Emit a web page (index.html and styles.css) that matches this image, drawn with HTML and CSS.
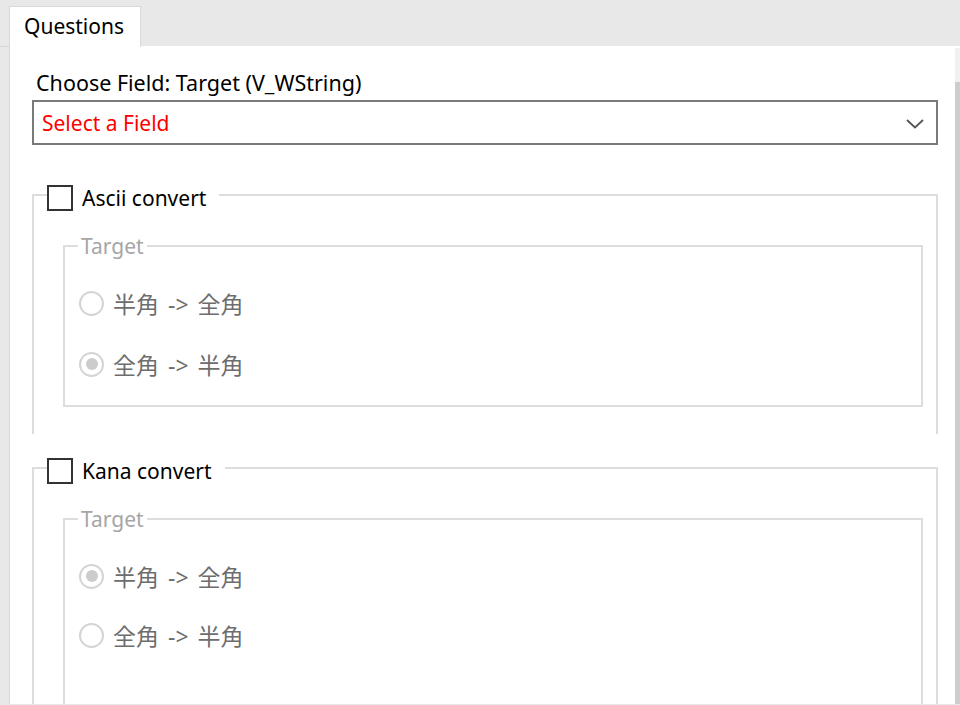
FILE: index.html
```html
<!DOCTYPE html>
<html lang="ja">
<head>
<meta charset="utf-8">
<title>Questions</title>
<link rel="stylesheet" href="styles.css">
</head>
<body>
<div class="tabbar">
  <div class="tab">Questions</div>
</div>
<div class="main">
  <div class="panel">
    <div class="field-label">Choose Field: Target (V_WString)</div>
    <div class="select">
      <span class="select-text">Select a Field</span>
      <svg class="chevron" width="18" height="10" viewBox="0 0 18 10"><path d="M1 1 L9 8.5 L17 1" fill="none" stroke="#555" stroke-width="1.8"/></svg>
    </div>

    <fieldset class="group group-ascii">
      <legend class="group-legend"><span class="checkbox"></span><span class="cb-label">Ascii convert</span></legend>
      <fieldset class="inner inner-ascii">
        <legend class="inner-legend">Target</legend>
        <div class="radio-row"><span class="radio"></span><span class="radio-label">半角 -&gt; 全角</span></div>
        <div class="radio-row"><span class="radio checked"></span><span class="radio-label">全角 -&gt; 半角</span></div>
      </fieldset>
    </fieldset>

    <fieldset class="group group-kana">
      <legend class="group-legend"><span class="checkbox"></span><span class="cb-label">Kana convert</span></legend>
      <fieldset class="inner inner-kana">
        <legend class="inner-legend">Target</legend>
        <div class="radio-row"><span class="radio checked"></span><span class="radio-label">半角 -&gt; 全角</span></div>
        <div class="radio-row"><span class="radio"></span><span class="radio-label">全角 -&gt; 半角</span></div>
      </fieldset>
    </fieldset>
  </div>
  <div class="scrollbar">
    <div class="scroll-top"></div>
    <div class="scroll-thumb"></div>
  </div>
</div>
</body>
</html>
```

FILE: styles.css
```css
html, body {
  margin: 0;
  padding: 0;
}
body {
  width: 960px;
  height: 705px;
  overflow: hidden;
  background: #e8e8e8;
  font-family: "Noto Sans", "Noto Sans CJK JP", sans-serif;
  font-size: 21px;
  color: #000;
}
.tabbar {
  height: 47px;
  box-sizing: border-box;
  padding: 6px 0 0 9px;
  border-bottom: 1px solid #d6d6d6;
  display: flex;
}
.tab {
  background: #fff;
  border: 1px solid #d9d9d9;
  border-bottom: none;
  height: 41px;
  box-sizing: border-box;
  width: 132px;
  padding: 0 0 0 14px;
  line-height: 38px;
  font-size: 21px;
  color: #000;
  position: relative;
  z-index: 1;
}
.main {
  display: flex;
  height: 658px;
  margin-top: -1px;
  margin-left: 9px;
  background: #fff;
  border-left: 1px solid #d9d9d9;
}
.panel {
  flex: 1;
  padding-top: 22px;
  overflow: hidden;
}
.field-label {
  margin-left: 26px;
  height: 30px;
  line-height: 30px;
  margin-bottom: 2px;
  font-size: 21.5px;
}
.select {
  margin-left: 22px;
  width: 906px;
  height: 45px;
  box-sizing: border-box;
  border: 2px solid #7a7a7a;
  display: flex;
  align-items: center;
  justify-content: space-between;
  padding: 0 12px 0 8px;
}
.select-text {
  color: #ff0000;
}
.chevron {
  display: block;
  margin-top: 2px;
}
.group {
  margin: 0 0 0 22px;
  width: 906px;
  box-sizing: border-box;
  border: 2px solid #dddddd;
  border-bottom: none;
  padding: 0 13px 0 29px;
  min-width: 0;
}
.group-ascii {
  margin-top: 34px;
  height: 255px;
}
.group-kana {
  margin-top: 18px;
  height: 400px;
}
.group-legend {
  display: flex;
  align-items: center;
  padding: 6px 0 0 0;
  margin-left: -16px;
  height: 32px;
  box-sizing: border-box;
}
.checkbox {
  width: 26px;
  height: 26px;
  box-sizing: border-box;
  border: 2px solid #333;
  background: #fff;
}
.cb-label {
  margin-left: 9px;
  margin-right: 13px;
  line-height: 26px;
}
.inner {
  margin: 23px 0 0 0;
  border: 2px solid #dddddd;
  padding: 25px 0 21px 14px;
  min-width: 0;
  display: flex;
  flex-direction: column;
  gap: 21px;
}
.inner-kana {
  border-bottom: none;
  height: 300px;
  gap: 19px;
}
.inner-legend {
  color: #a6a6a6;
  line-height: 24px;
  padding: 0 3px;
  margin-left: -1px;
}
.radio-row {
  height: 40px;
  display: flex;
  align-items: center;
}
.radio {
  width: 25px;
  height: 25px;
  box-sizing: border-box;
  border: 2px solid #d4d4d4;
  border-radius: 50%;
  display: flex;
  align-items: center;
  justify-content: center;
}
.radio.checked::after {
  content: "";
  width: 12px;
  height: 12px;
  border-radius: 50%;
  background: #cccccc;
}
.radio-label {
  margin-left: 9px;
  font-size: 23px;
  word-spacing: 3px;
  color: #6d6d6d;
}
.scrollbar {
  width: 5px;
  margin-left: 17px;
  display: flex;
  flex-direction: column;
  padding-top: 2px;
}
.scroll-top {
  height: 34px;
  background: #f0f0f0;
}
.scroll-thumb {
  flex: 1;
  background: #cdcdcd;
}
```
